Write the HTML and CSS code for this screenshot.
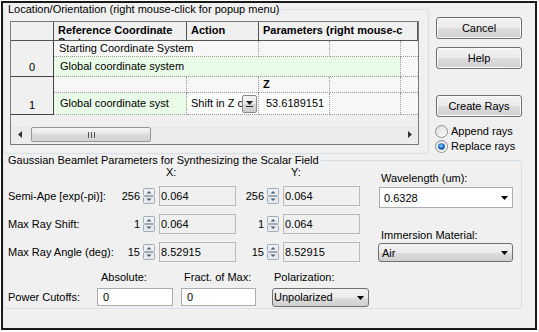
FILE: index.html
```html
<!DOCTYPE html>
<html>
<head>
<meta charset="utf-8">
<link rel="stylesheet" href="styles.css">
</head>
<body>
<div class="frame">
  <div class="top">
    <fieldset class="group g1">
      <legend>Location/Orientation (right mouse-click for popup menu)</legend>
      <div class="table">
        <div class="grid">
          <div class="hc corner"></div>
          <div class="hc">Reference Coordinate<br>System</div>
          <div class="hc">Action</div>
          <div class="hc params">Parameters (right mouse-c</div>

          <div class="rh r0">0</div>
          <div class="c span2">Starting Coordinate System</div>
          <div class="c"></div>
          <div class="c"></div>
          <div class="c last"></div>

          <div class="c green span4">Global coordinate system</div>
          <div class="c last"></div>

          <div class="rh r1">1</div>
          <div class="c"></div>
          <div class="c"></div>
          <div class="c bold">Z</div>
          <div class="c"></div>
          <div class="c last"></div>

          <div class="c green tall">Global coordinate syst</div>
          <div class="c sel tall"><span class="seltext">Shift in Z c</span><span class="ddb"><svg width="7" height="6" viewBox="0 0 7 6"><path d="M0 0h7L3.5 4z" fill="#222"/><rect x="0" y="5" width="7" height="1" fill="#222"/></svg></span></div>
          <div class="c white tall num">53.6189151</div>
          <div class="c tall"></div>
          <div class="c tall last"></div>
        </div>
        <div class="sb">
          <div class="sbbtn"><svg width="4" height="7" viewBox="0 0 4 7"><path d="M4 0v7L0 3.5z" fill="#333"/></svg></div>
          <div class="track">
            <div class="thumb"><svg width="7" height="6" viewBox="0 0 7 6"><rect x="0" y="0" width="1" height="6" fill="#555"/><rect x="3" y="0" width="1" height="6" fill="#555"/><rect x="6" y="0" width="1" height="6" fill="#555"/></svg></div>
          </div>
          <div class="sbbtn"><svg width="4" height="7" viewBox="0 0 4 7"><path d="M0 0v7L4 3.5z" fill="#333"/></svg></div>
        </div>
      </div>
    </fieldset>
    <div class="side">
      <div class="btn">Cancel</div>
      <div class="btn help">Help</div>
      <div class="btn create">Create Rays</div>
      <div class="radio first"><svg width="13" height="13" viewBox="0 0 13 13"><defs><linearGradient id="rg" x1="0" y1="0" x2="1" y2="1"><stop offset="0" stop-color="#dcdcdc"/><stop offset="1" stop-color="#ffffff"/></linearGradient></defs><circle cx="6.5" cy="6.5" r="6" fill="url(#rg)" stroke="#8e8f8f"/></svg><span>Append rays</span></div>
      <div class="radio"><svg width="13" height="13" viewBox="0 0 13 13"><defs><radialGradient id="bg" cx="0.45" cy="0.4" r="0.6"><stop offset="0" stop-color="#8fd3ff"/><stop offset="0.6" stop-color="#1a74c9"/><stop offset="1" stop-color="#0b3f7a"/></radialGradient></defs><circle cx="6.5" cy="6.5" r="6" fill="url(#rg)" stroke="#8e8f8f"/><circle cx="6.5" cy="6.5" r="3.3" fill="url(#bg)"/></svg><span>Replace rays</span></div>
    </div>
  </div>

  <fieldset class="group g2">
    <legend>Gaussian Beamlet Parameters for Synthesizing the Scalar Field</legend>
    <div class="g2body">
      <div class="left">
        <div class="spingrid">
          <div class="xh">X:</div>
          <div class="yh">Y:</div>

          <div class="lbl">Semi-Ape [exp(-pi)]:</div>
          <div class="n">256</div>
          <div class="spin"><svg width="12" height="16" viewBox="0 0 12 16"><rect x="0.5" y="0.5" width="11" height="7" rx="1" fill="#eef1f4" stroke="#a2abb5"/><rect x="0.5" y="8.5" width="11" height="7" rx="1" fill="#e6eaee" stroke="#a2abb5"/><path d="M3.5 5.5L6 3l2.5 2.5z" fill="#4d5d75"/><path d="M3.5 10.5L6 13l2.5-2.5z" fill="#4d5d75"/></svg></div>
          <div class="tb">0.064</div>
          <div class="n">256</div>
          <div class="spin"><svg width="12" height="16" viewBox="0 0 12 16"><rect x="0.5" y="0.5" width="11" height="7" rx="1" fill="#eef1f4" stroke="#a2abb5"/><rect x="0.5" y="8.5" width="11" height="7" rx="1" fill="#e6eaee" stroke="#a2abb5"/><path d="M3.5 5.5L6 3l2.5 2.5z" fill="#4d5d75"/><path d="M3.5 10.5L6 13l2.5-2.5z" fill="#4d5d75"/></svg></div>
          <div class="tb">0.064</div>

          <div class="lbl">Max Ray Shift:</div>
          <div class="n">1</div>
          <div class="spin"><svg width="12" height="16" viewBox="0 0 12 16"><rect x="0.5" y="0.5" width="11" height="7" rx="1" fill="#eef1f4" stroke="#a2abb5"/><rect x="0.5" y="8.5" width="11" height="7" rx="1" fill="#e6eaee" stroke="#a2abb5"/><path d="M3.5 5.5L6 3l2.5 2.5z" fill="#4d5d75"/><path d="M3.5 10.5L6 13l2.5-2.5z" fill="#4d5d75"/></svg></div>
          <div class="tb">0.064</div>
          <div class="n">1</div>
          <div class="spin"><svg width="12" height="16" viewBox="0 0 12 16"><rect x="0.5" y="0.5" width="11" height="7" rx="1" fill="#eef1f4" stroke="#a2abb5"/><rect x="0.5" y="8.5" width="11" height="7" rx="1" fill="#e6eaee" stroke="#a2abb5"/><path d="M3.5 5.5L6 3l2.5 2.5z" fill="#4d5d75"/><path d="M3.5 10.5L6 13l2.5-2.5z" fill="#4d5d75"/></svg></div>
          <div class="tb">0.064</div>

          <div class="lbl">Max Ray Angle (deg):</div>
          <div class="n">15</div>
          <div class="spin"><svg width="12" height="16" viewBox="0 0 12 16"><rect x="0.5" y="0.5" width="11" height="7" rx="1" fill="#eef1f4" stroke="#a2abb5"/><rect x="0.5" y="8.5" width="11" height="7" rx="1" fill="#e6eaee" stroke="#a2abb5"/><path d="M3.5 5.5L6 3l2.5 2.5z" fill="#4d5d75"/><path d="M3.5 10.5L6 13l2.5-2.5z" fill="#4d5d75"/></svg></div>
          <div class="tb">8.52915</div>
          <div class="n">15</div>
          <div class="spin"><svg width="12" height="16" viewBox="0 0 12 16"><rect x="0.5" y="0.5" width="11" height="7" rx="1" fill="#eef1f4" stroke="#a2abb5"/><rect x="0.5" y="8.5" width="11" height="7" rx="1" fill="#e6eaee" stroke="#a2abb5"/><path d="M3.5 5.5L6 3l2.5 2.5z" fill="#4d5d75"/><path d="M3.5 10.5L6 13l2.5-2.5z" fill="#4d5d75"/></svg></div>
          <div class="tb">8.52915</div>
        </div>
        <div class="power">
          <div class="ph abs">Absolute:</div>
          <div class="ph fr">Fract. of Max:</div>
          <div class="ph pol">Polarization:</div>
          <div class="plbl">Power Cutoffs:</div>
          <div class="wb">0</div>
          <div class="wb">0</div>
          <div class="combo btncombo polc"><span>Unpolarized</span><svg width="7" height="4" viewBox="0 0 7 4"><path d="M0 0h7L3.5 4z" fill="#000"/></svg></div>
        </div>
      </div>
      <div class="right">
        <div class="rl">Wavelength (um):</div>
        <div class="combo wcombo"><span>0.6328</span><svg width="7" height="4" viewBox="0 0 7 4"><path d="M0 0h7L3.5 4z" fill="#000"/></svg></div>
        <div class="rl imm">Immersion Material:</div>
        <div class="combo btncombo airc"><span>Air</span><svg width="7" height="4" viewBox="0 0 7 4"><path d="M0 0h7L3.5 4z" fill="#000"/></svg></div>
      </div>
    </div>
  </fieldset>
</div>
</body>
</html>
```

FILE: styles.css
```css
* { box-sizing: border-box; }
html, body { margin: 0; padding: 0; background: #fff; }
body { font-family: "Liberation Sans", Arial, sans-serif; font-size: 11px; color: #000; }

.frame {
  margin: 1px;
  width: 536px;
  height: 329px;
  border: 2px solid #1a1a1a;
  background: #f0f0f0;
}

.top { display: flex; align-items: flex-start; }

fieldset.group {
  margin: 0;
  border: 1px solid #d5dfe5;
  border-radius: 3px;
  min-width: 0;
}
.group legend { font-size: 11px; line-height: 13px; padding: 0 2px; }

.g1 { margin: 6px 0 0 2px; width: 426px; height: 151px; padding: 0 9px 0 6px; }
.g1 legend { margin-left: -4px; }

.table {
  margin-top: 5px;
  width: 409px;
  height: 124px;
  border: 1px solid #7a7a7a;
  background: #f0f0f0;
  display: flex;
  flex-direction: column;
  overflow: hidden;
}
.grid {
  display: grid;
  grid-template-columns: 43px 133px 72px 71px 71px 17px;
  grid-template-rows: 19px 16px 20px 16px 22px;
}
.hc {
  background: #f0f0f0;
  border-right: 1px solid #555;
  border-bottom: 1px solid #555;
  font-weight: bold;
  padding: 2px 0 0 4px;
  line-height: 12px;
  overflow: hidden;
  white-space: nowrap;
}
.hc.params { grid-column: 4 / 7; }
.rh {
  grid-column: 1;
  background: #f0f0f0;
  border-right: 1px solid #444;
  border-bottom: 1px solid #444;
  display: flex;
  align-items: flex-end;
  justify-content: center;
  padding-bottom: 2px;
  line-height: 13px;
}
.rh.r0 { grid-row: 2 / 4; }
.rh.r1 { grid-row: 4 / 6; }
.c {
  background: #f7f7f7;
  border-right: 1px dotted #9a9a9a;
  border-bottom: 1px dotted #9a9a9a;
  white-space: nowrap;
  overflow: hidden;
  padding-left: 5px;
  line-height: 15px;
}
.c.last { border-right: none; }
.c.span2 { grid-column: 2 / 4; }
.c.span4 { grid-column: 2 / 6; }
.c.green { background: #e9fce7; padding-left: 6px; line-height: 19px; }
.c.tall { line-height: 21px; }
.c.bold { font-weight: bold; padding-left: 4px; }
.c.white { background: #fff; }
.c.num { padding-left: 7px; }
.c.sel {
  background: #fff;
  display: flex;
  align-items: center;
  padding-left: 4px;
  padding-right: 1px;
}
.seltext { flex: 1; overflow: hidden; white-space: nowrap; }
.ddb {
  width: 15px;
  height: 18px;
  border: 1px solid #8a8a8a;
  border-radius: 2px;
  background: linear-gradient(#f4f4f4, #e6e6e6 50%, #d6d6d6 50%, #cdcdcd);
  display: flex;
  align-items: center;
  justify-content: center;
}

.sb {
  margin-top: auto;
  margin-bottom: 1px;
  height: 17px;
  display: flex;
  background: #ebebeb;
}
.sbbtn { width: 17px; display: flex; align-items: center; justify-content: center; }
.track { flex: 1; }
.thumb {
  margin: 1px 0 0 3px;
  width: 120px;
  height: 15px;
  border: 1px solid #979797;
  border-radius: 2px;
  background: linear-gradient(#f5f5f5, #e6e6e6 50%, #dadada 50%, #d2d2d2);
  display: flex;
  align-items: center;
  justify-content: center;
}

.side {
  margin-left: 7px;
  width: 86px;
  padding-top: 14px;
  display: flex;
  flex-direction: column;
}
.btn {
  height: 22px;
  border: 1px solid #707070;
  border-radius: 3px;
  background: linear-gradient(#f2f2f2, #ebebeb 50%, #dddddd 50%, #cfcfcf);
  box-shadow: inset 0 0 0 1px #fbfbfb;
  display: flex;
  align-items: center;
  justify-content: center;
  line-height: 13px;
}
.btn.help { margin-top: 8px; }
.btn.create { margin-top: 26px; }
.radio {
  height: 15px;
  margin-left: -1px;
  display: flex;
  align-items: center;
  gap: 3px;
  line-height: 13px;
}
.radio.first { margin-top: 7px; }

.g2 { margin: 10px 0 0 2px; width: 519px; height: 155px; padding: 0 0 0 4px; }
.g2 legend { margin-left: -2px; }
.g2body { display: flex; }
.left { width: 352px; flex: none; }
.spingrid {
  display: grid;
  grid-template-columns: 110px 24px 17px 77px 30px 17px 77px;
  grid-template-rows: 11px 20px 20px 20px;
  row-gap: 8px;
  align-items: center;
  line-height: 13px;
}
.xh { grid-column: 4; padding-left: 7px; }
.yh { grid-column: 7; padding-left: 8px; }
.lbl { grid-column: 1; white-space: nowrap; }
.n { text-align: right; padding-right: 2px; }
.spin { height: 16px; margin-left: 1px; display: flex; }
.tb {
  height: 20px;
  border: 1px solid #b9b9b9;
  background: #f0f0f0;
  padding-left: 1px;
  line-height: 18px;
}

.power {
  margin-top: 9px;
  display: grid;
  grid-template-columns: 81px 76px 75px 105px;
  grid-template-rows: 13px 18px;
  column-gap: 8px;
  row-gap: 4px;
  line-height: 13px;
}
.ph.abs { grid-column: 2; padding-left: 4px; }
.ph.fr { grid-column: 3; padding-left: 3px; }
.ph.pol { grid-column: 4; padding-left: 10px; }
.plbl { grid-column: 1; line-height: 18px; white-space: nowrap; }
.wb {
  height: 18px;
  border: 1px solid #abadb3;
  background: #fff;
  padding-left: 5px;
  line-height: 16px;
}
.combo {
  display: flex;
  align-items: center;
  justify-content: space-between;
  padding: 0 4px 0 4px;
}
.btncombo {
  border: 1px solid #707070;
  border-radius: 3px;
  background: linear-gradient(#f2f2f2, #ebebeb 50%, #dddddd 50%, #cfcfcf);
}
.polc { margin-left: 8px; width: 97px; height: 19px; padding-left: 1px; }

.right { margin-left: 19px; width: 134px; }
.rl { margin-top: 5px; line-height: 13px; padding-left: 2px; }
.rl.imm { margin-top: 21px; }
.wcombo {
  margin-top: 2px;
  height: 21px;
  border: 1px solid #abadb3;
  background: #fff;
}
.airc { margin-top: 1px; margin-left: -1px; width: 135px; height: 19px; padding-left: 3px; }
```
